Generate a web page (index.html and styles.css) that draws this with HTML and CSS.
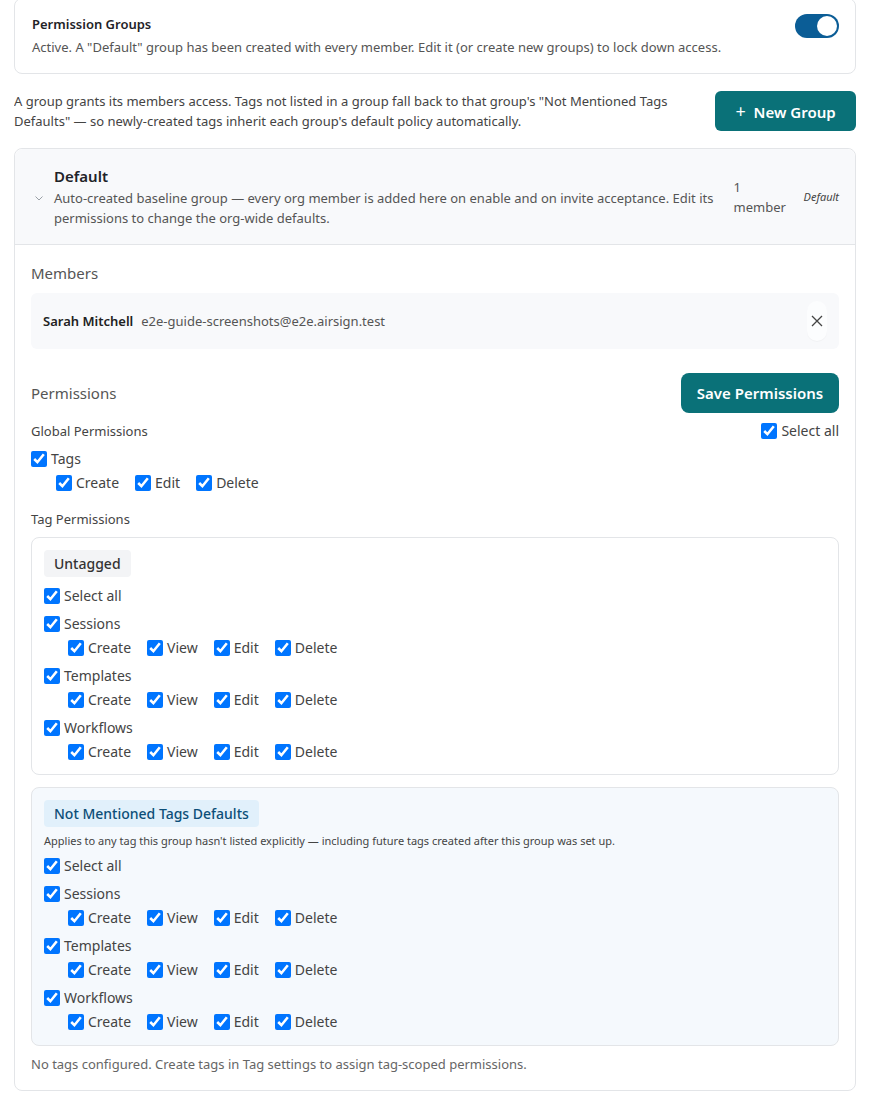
FILE: index.html
```html
<!DOCTYPE html>
<html lang="en">
<head>
    <meta charset="UTF-8">
    <meta name="viewport" content="width=device-width, initial-scale=1.0">
    <title>Permission Groups</title>
    <link rel="stylesheet" href="styles.css">
</head>
<body>
    <div class="card status-card">
        <div class="status-text">
            <div class="status-title">Permission Groups</div>
            <div class="status-desc">Active. A "Default" group has been created with every member. Edit it (or create new groups) to lock down access.</div>
        </div>
        <div class="toggle"><span class="knob"></span></div>
    </div>

    <div class="intro">
        <p>A group grants its members access. Tags not listed in a group fall back to that group's "Not Mentioned Tags Defaults" — so newly-created tags inherit each group's default policy automatically.</p>
        <button class="btn btn-new"><span class="plus">+</span> New Group</button>
    </div>

    <div class="card group">
        <div class="group-head">
            <svg class="chevron" width="8" height="5" viewBox="0 0 8 5"><path d="M0.5 0.5l3.5 3.5 3.5-3.5" fill="none" stroke="#9aa0a6" stroke-width="1"/></svg>
            <div class="group-info">
                <div class="group-name">Default</div>
                <div class="group-desc">Auto-created baseline group — every org member is added here on enable and on invite acceptance. Edit its permissions to change the org-wide defaults.</div>
            </div>
            <div class="member-count">1 member</div>
            <div class="group-badge">Default</div>
        </div>

        <div class="group-body">
            <div class="section-title">Members</div>
            <div class="member-row">
                <span class="member-name">Sarah Mitchell</span>
                <span class="member-email">e2e-guide-screenshots@e2e.airsign.test</span>
                <span class="remove">
                    <svg width="12" height="12" viewBox="0 0 12 12"><path d="M1 1l10 10M11 1L1 11" stroke="#444" stroke-width="1.3"/></svg>
                </span>
            </div>

            <div class="perm-head">
                <div class="section-title">Permissions</div>
                <button class="btn btn-save">Save Permissions</button>
            </div>

            <div class="global-head">
                <div class="sub-title">Global Permissions</div>
                <label class="check"><input type="checkbox" checked> Select all</label>
            </div>
            <div class="resource global-list">
                <label class="check"><input type="checkbox" checked> Tags</label>
                <div class="actions">
                    <label class="check"><input type="checkbox" checked> Create</label>
                    <label class="check"><input type="checkbox" checked> Edit</label>
                    <label class="check"><input type="checkbox" checked> Delete</label>
                </div>
            </div>

            <div class="sub-title tag-title">Tag Permissions</div>

            <div class="tag-box">
                <span class="chip">Untagged</span>
                <div class="tag-list">
                    <label class="check"><input type="checkbox" checked> Select all</label>
                    <div class="resource">
                        <label class="check"><input type="checkbox" checked> Sessions</label>
                        <div class="actions">
                            <label class="check"><input type="checkbox" checked> Create</label>
                            <label class="check"><input type="checkbox" checked> View</label>
                            <label class="check"><input type="checkbox" checked> Edit</label>
                            <label class="check"><input type="checkbox" checked> Delete</label>
                        </div>
                    </div>
                    <div class="resource">
                        <label class="check"><input type="checkbox" checked> Templates</label>
                        <div class="actions">
                            <label class="check"><input type="checkbox" checked> Create</label>
                            <label class="check"><input type="checkbox" checked> View</label>
                            <label class="check"><input type="checkbox" checked> Edit</label>
                            <label class="check"><input type="checkbox" checked> Delete</label>
                        </div>
                    </div>
                    <div class="resource">
                        <label class="check"><input type="checkbox" checked> Workflows</label>
                        <div class="actions">
                            <label class="check"><input type="checkbox" checked> Create</label>
                            <label class="check"><input type="checkbox" checked> View</label>
                            <label class="check"><input type="checkbox" checked> Edit</label>
                            <label class="check"><input type="checkbox" checked> Delete</label>
                        </div>
                    </div>
                </div>
            </div>

            <div class="tag-box tag-box-default">
                <span class="chip chip-blue">Not Mentioned Tags Defaults</span>
                <div class="box-note">Applies to any tag this group hasn't listed explicitly — including future tags created after this group was set up.</div>
                <div class="tag-list">
                    <label class="check"><input type="checkbox" checked> Select all</label>
                    <div class="resource">
                        <label class="check"><input type="checkbox" checked> Sessions</label>
                        <div class="actions">
                            <label class="check"><input type="checkbox" checked> Create</label>
                            <label class="check"><input type="checkbox" checked> View</label>
                            <label class="check"><input type="checkbox" checked> Edit</label>
                            <label class="check"><input type="checkbox" checked> Delete</label>
                        </div>
                    </div>
                    <div class="resource">
                        <label class="check"><input type="checkbox" checked> Templates</label>
                        <div class="actions">
                            <label class="check"><input type="checkbox" checked> Create</label>
                            <label class="check"><input type="checkbox" checked> View</label>
                            <label class="check"><input type="checkbox" checked> Edit</label>
                            <label class="check"><input type="checkbox" checked> Delete</label>
                        </div>
                    </div>
                    <div class="resource">
                        <label class="check"><input type="checkbox" checked> Workflows</label>
                        <div class="actions">
                            <label class="check"><input type="checkbox" checked> Create</label>
                            <label class="check"><input type="checkbox" checked> View</label>
                            <label class="check"><input type="checkbox" checked> Edit</label>
                            <label class="check"><input type="checkbox" checked> Delete</label>
                        </div>
                    </div>
                </div>
            </div>

            <p class="empty-note">No tags configured. Create tags in Tag settings to assign tag-scoped permissions.</p>
        </div>
    </div>
</body>
</html>
```

FILE: styles.css
```css
body {
    margin: -2px 14px 0;
    font-family: "Noto Sans", "Open Sans", sans-serif;
    font-size: 13px;
    color: #333;
    background: #fff;
}
.card {
    border: 1px solid #e3e5e8;
    border-radius: 8px;
    background: #fff;
}
.status-card {
    display: flex;
    align-items: flex-start;
    justify-content: space-between;
    padding: 15px 16px 16px 17px;
}
.status-title {
    font-weight: 600;
    line-height: 20px;
    color: #1f2328;
}
.status-desc {
    margin-top: 3px;
    line-height: 20px;
    color: #555;
}
.toggle {
    width: 44px;
    height: 24px;
    border-radius: 12px;
    background: #0b5d96;
    display: flex;
    align-items: center;
    justify-content: flex-end;
    padding: 0 2px;
    box-sizing: border-box;
}
.knob {
    width: 20px;
    height: 20px;
    border-radius: 50%;
    background: #fff;
}
.intro {
    display: flex;
    align-items: center;
    gap: 40px;
    margin: 17px 0;
}
.intro p {
    margin: 0;
    flex: 1;
    line-height: 20px;
    color: #444;
}
.btn {
    border: none;
    color: #fff;
    background: #0a7178;
    font-family: inherit;
    font-weight: 600;
    font-size: 15px;
    border-radius: 6px;
    height: 40px;
    cursor: pointer;
}
.btn-new {
    width: 141px;
}
.plus {
    font-weight: 400;
    font-size: 18px;
    margin-right: 4px;
}
.btn-save {
    width: 158px;
    border-radius: 8px;
}
.group-head {
    display: flex;
    align-items: center;
    padding: 16px 16px 16px 20px;
    background: #f8f9fb;
    border-bottom: 1px solid #e3e5e8;
    border-radius: 8px 8px 0 0;
}
.chevron {
    flex-shrink: 0;
    margin-right: 11px;
    margin-top: 3px;
}
.group-info {
    flex: 1;
}
.group-name {
    font-size: 15px;
    font-weight: 600;
    line-height: 22px;
    color: #1f2328;
}
.group-desc {
    margin-top: 1px;
    line-height: 20px;
    color: #555;
}
.member-count {
    width: 52px;
    margin-left: 6px;
    line-height: 20px;
    color: #555;
}
.group-badge {
    margin-left: 18px;
    font-size: 11px;
    font-style: italic;
    color: #444;
}
.group-body {
    padding: 17px 16px 16px;
}
.section-title {
    font-size: 15px;
    line-height: 22px;
    color: #555;
}
.member-row {
    display: flex;
    align-items: center;
    margin-top: 9px;
    height: 56px;
    padding: 0 12px;
    background: #f8f9fb;
    border-radius: 6px;
}
.member-name {
    font-weight: 600;
    color: #222;
    margin-right: 8px;
}
.member-email {
    flex: 1;
    color: #555;
}
.remove {
    width: 20px;
    height: 40px;
    display: flex;
    align-items: center;
    justify-content: center;
    border-radius: 10px;
    background: #fcfdfe;
    box-shadow: 0 1px 1px rgba(0, 0, 0, 0.03);
}
.perm-head {
    display: flex;
    align-items: center;
    justify-content: space-between;
    margin-top: 24px;
}
.global-head {
    display: flex;
    justify-content: space-between;
    align-items: center;
    margin-top: 8px;
}
.sub-title {
    line-height: 20px;
    color: #444;
}
.check {
    display: flex;
    align-items: center;
    gap: 4px;
    width: max-content;
    height: 20px;
    line-height: 20px;
    font-size: 14px;
    color: #444;
}
.check input {
    width: 16px;
    height: 16px;
    margin: 0;
}
.resource {
    display: flex;
    flex-direction: column;
    gap: 4px;
}
.global-list {
    margin-top: 8px;
}
.actions {
    display: flex;
    gap: 16px;
    margin-left: 25px;
}
.tag-title {
    margin-top: 16px;
}
.tag-box {
    margin-top: 8px;
    padding: 12px;
    border: 1px solid #e3e5e8;
    border-radius: 8px;
}
.tag-box-default {
    margin-top: 12px;
    padding-bottom: 13px;
    background: #f5f9fd;
}
.chip {
    display: inline-block;
    padding: 4px 10px 3px;
    line-height: 20px;
    font-size: 14px;
    font-weight: 500;
    color: #333;
    background: #f3f4f6;
    border-radius: 4px;
}
.chip-blue {
    background: #e1f0fb;
    color: #0c4e78;
}
.box-note {
    margin-top: 5px;
    font-size: 11px;
    line-height: 18px;
    color: #444;
}
.tag-list {
    display: flex;
    flex-direction: column;
    gap: 8px;
    margin-top: 9px;
}
.box-note + .tag-list {
    margin-top: 6px;
}
.tag-list .actions {
    margin-left: 24px;
}
.empty-note {
    margin: 8px 0 0;
    line-height: 20px;
    color: #666;
}
```
